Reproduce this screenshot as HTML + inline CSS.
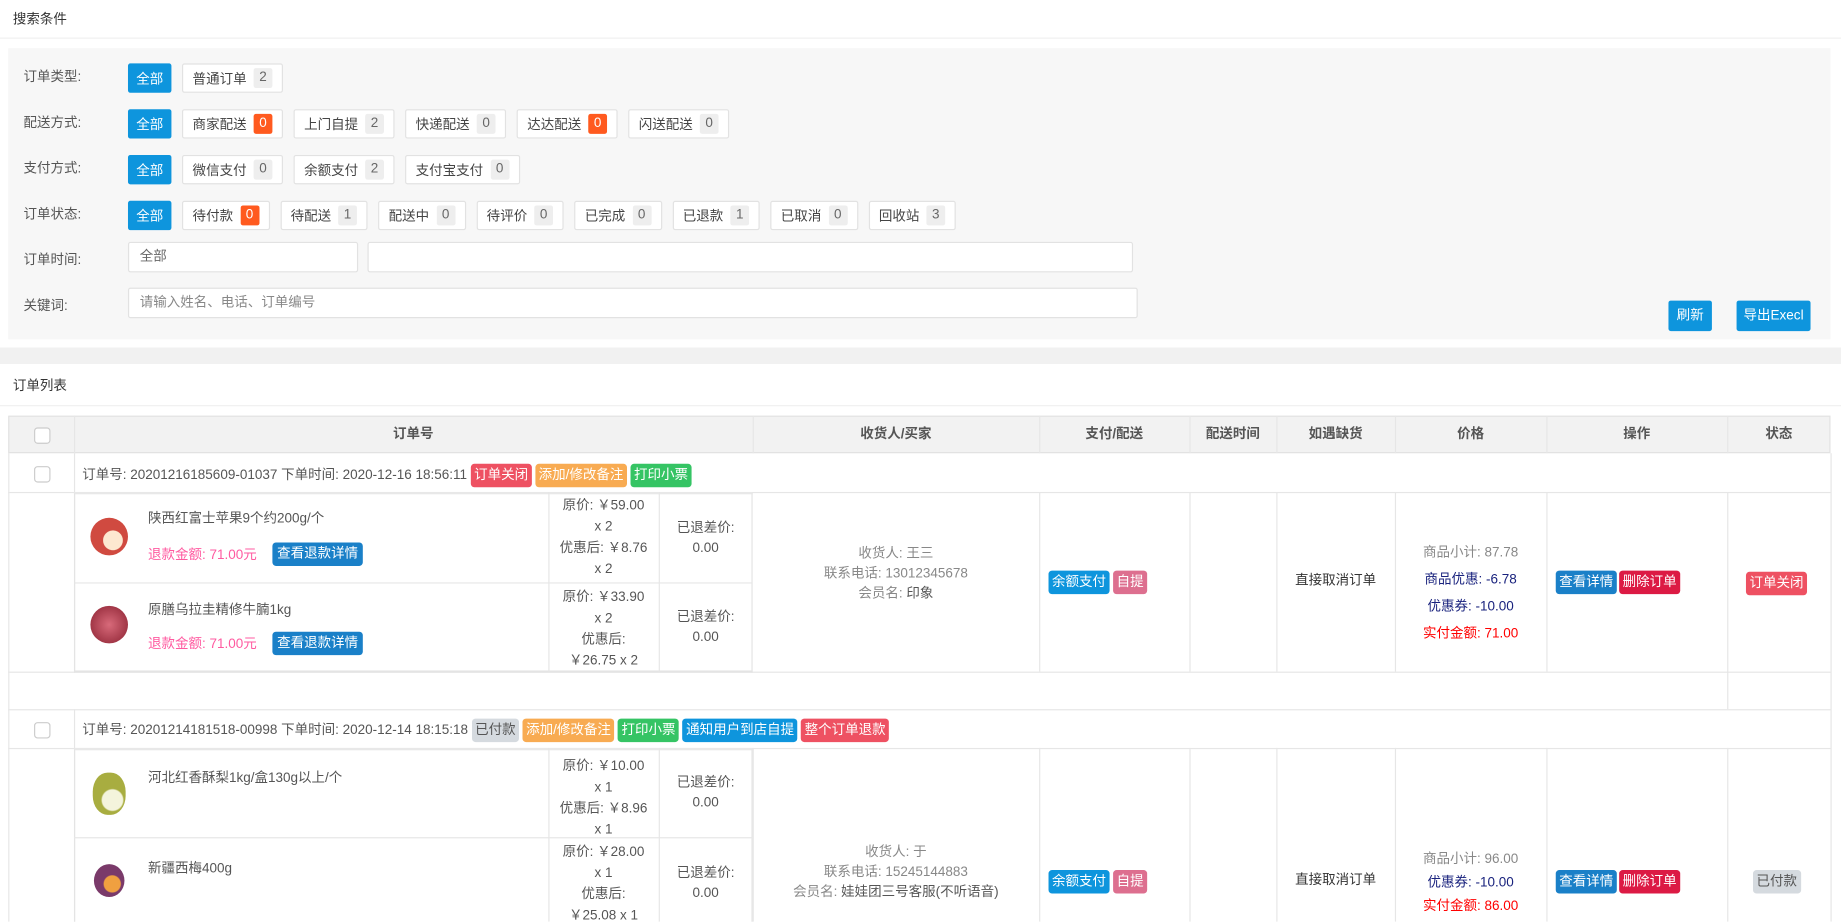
<!DOCTYPE html>
<html><head><meta charset="utf-8"><style>
*{margin:0;padding:0;box-sizing:border-box}
body{width:1841px;height:921px;overflow:hidden;background:#fff;font-family:"Liberation Sans","Noto Sans CJK SC",sans-serif;font-size:11.5px;color:#555;position:relative}
#w{position:absolute;left:0;top:0;width:1568px;height:785px;transform:scale(1.17415);transform-origin:0 0;overflow:hidden}
.a{position:absolute}
.lbl{position:absolute;left:20px;color:#555;line-height:14px}
.row{position:absolute;left:109px;display:flex;gap:9px;height:25px}
.b{height:25px;border:1px solid #e2e2e2;background:#fff;border-radius:2px;display:flex;align-items:center;padding:0 8px;color:#444;white-space:nowrap}
.b.on{background:#0e95dd;border-color:#0e95dd;color:#fff;padding:0 6px}
.n{display:inline-block;min-width:16px;height:17px;line-height:17px;text-align:center;background:#eee;color:#666;border-radius:2px;margin-left:6px;padding:0 4px}
.n.r{background:#ff5a1f;color:#fff}
.inp{position:absolute;height:26px;border:1px solid #e2e2e2;background:#fff;border-radius:2px;padding:0 9px;line-height:24px;color:#666}
.vl{position:absolute;width:1px;background:#e6e6e6}
.hl{position:absolute;height:1px;background:#e6e6e6}
.th{position:absolute;top:354px;height:32px;line-height:32px;text-align:center;font-weight:bold;color:#555}
.cb{position:absolute;width:14px;height:14px;border:1px solid #ccc;border-radius:3px;background:#fff}
.tag{display:inline-block;height:20px;line-height:20px;padding:0 3px;color:#fff;border-radius:3px;font-size:11.5px;margin-left:3px}
.c{position:absolute;text-align:center;line-height:17px}
</style></head><body><div id="w">
<div class="a" style="left:11px;top:8px;color:#333">搜索条件</div>
<div class="hl" style="left:0;top:32px;width:1568px;background:#f0f0f0"></div>
<div class="a" style="left:7px;top:41px;width:1552px;height:248px;background:#f7f7f7"></div>

<div class="lbl" style="top:59px">订单类型:</div>
<div class="row" style="top:54px"><div class="b on">全部</div><div class="b">普通订单<span class="n">2</span></div></div>
<div class="lbl" style="top:98px">配送方式:</div>
<div class="row" style="top:93px"><div class="b on">全部</div><div class="b">商家配送<span class="n r">0</span></div><div class="b">上门自提<span class="n">2</span></div><div class="b">快递配送<span class="n">0</span></div><div class="b">达达配送<span class="n r">0</span></div><div class="b">闪送配送<span class="n">0</span></div></div>
<div class="lbl" style="top:137px">支付方式:</div>
<div class="row" style="top:132px"><div class="b on">全部</div><div class="b">微信支付<span class="n">0</span></div><div class="b">余额支付<span class="n">2</span></div><div class="b">支付宝支付<span class="n">0</span></div></div>
<div class="lbl" style="top:176px">订单状态:</div>
<div class="row" style="top:171px"><div class="b on">全部</div><div class="b">待付款<span class="n r">0</span></div><div class="b">待配送<span class="n">1</span></div><div class="b">配送中<span class="n">0</span></div><div class="b">待评价<span class="n">0</span></div><div class="b">已完成<span class="n">0</span></div><div class="b">已退款<span class="n">1</span></div><div class="b">已取消<span class="n">0</span></div><div class="b">回收站<span class="n">3</span></div></div>
<div class="lbl" style="top:215px">订单时间:</div>
<div class="inp" style="left:109px;top:206px;width:196px">全部</div>
<div class="inp" style="left:313px;top:206px;width:652px"></div>
<div class="lbl" style="top:254px">关键词:</div>
<div class="inp" style="left:109px;top:245px;width:860px;color:#888">请输入姓名、电话、订单编号</div>
<div class="a" style="left:1421px;top:256px;width:37px;height:26px;background:#0e95dd;color:#fff;border-radius:2px;text-align:center;line-height:26px">刷新</div>
<div class="a" style="left:1479px;top:256px;width:63px;height:26px;background:#0e95dd;color:#fff;border-radius:2px;text-align:center;line-height:26px">导出Execl</div>

<div class="a" style="left:0;top:296px;width:1568px;height:14px;background:#f1f1f1"></div>
<div class="a" style="left:11px;top:320px;color:#333">订单列表</div>
<div class="hl" style="left:0;top:345px;width:1568px;background:#f0f0f0"></div>

<div class="a" style="left:7px;top:354px;width:1552px;height:32px;background:#f2f2f2;border:1px solid #e2e2e2"></div>
<div class="cb" style="left:29px;top:364px"></div>
<div class="th" style="left:63px;width:578px">订单号</div>
<div class="th" style="left:641px;width:244px">收货人/买家</div>
<div class="th" style="left:885px;width:128px">支付/配送</div>
<div class="th" style="left:1013px;width:74px">配送时间</div>
<div class="th" style="left:1087px;width:101px">如遇缺货</div>
<div class="th" style="left:1188px;width:129px">价格</div>
<div class="th" style="left:1317px;width:154px">操作</div>
<div class="th" style="left:1471px;width:88px">状态</div>
<div class="vl" style="left:63px;top:354px;height:32px"></div><div class="vl" style="left:641px;top:354px;height:32px"></div><div class="vl" style="left:885px;top:354px;height:32px"></div><div class="vl" style="left:1013px;top:354px;height:32px"></div><div class="vl" style="left:1087px;top:354px;height:32px"></div><div class="vl" style="left:1188px;top:354px;height:32px"></div><div class="vl" style="left:1317px;top:354px;height:32px"></div><div class="vl" style="left:1471px;top:354px;height:32px"></div>

<div class="vl" style="left:7px;top:386px;height:399px"></div>
<div class="vl" style="left:1559px;top:386px;height:399px"></div>
<div class="vl" style="left:63px;top:386px;height:186px"></div>
<div class="vl" style="left:63px;top:604px;height:181px"></div>

<div class="hl" style="left:7px;top:419px;width:1552px"></div>
<div class="cb" style="left:29px;top:397px"></div>
<div class="a" style="left:70px;top:395px;color:#555;white-space:nowrap">订单号: 20201216185609-01037 下单时间: 2020-12-16 18:56:11<span class="tag" style="background:#ee5162">订单关闭</span><span class="tag" style="background:#f8ab52">添加/修改备注</span><span class="tag" style="background:#35c464">打印小票</span></div>
<div class="a" style="left:63px;top:419px;width:578px;height:154px;border:1px solid #e4e4e4;border-top:2px solid #e8e8e8;border-bottom:2px solid #e4e4e4"></div>
<div class="hl" style="left:63px;top:496px;width:578px"></div>
<div class="vl" style="left:467px;top:419px;height:153px"></div><div class="vl" style="left:561px;top:419px;height:153px"></div>
<div class="a" style="left:77px;top:441px;width:32px;height:32px;border-radius:50%;background:radial-gradient(circle at 60% 60%,#fde8d0 30%,#d04a40 32%)"></div>
<div class="a" style="left:126px;top:433px;color:#555">陕西红富士苹果9个约200g/个</div>
<div class="a" style="left:126px;top:464px;color:#ff5aa0">退款金额: 71.00元</div>
<div class="a" style="left:232px;top:462px;height:20px;line-height:20px;padding:0 4px;background:#1a80c8;color:#fff;border-radius:3px">查看退款详情</div>
<div class="c" style="left:467px;top:422px;width:94px;line-height:18px">原价: ￥59.00<br>x 2<br>优惠后: ￥8.76<br>x 2</div>
<div class="c" style="left:561px;top:442px;width:80px">已退差价:<br>0.00</div>
<div class="a" style="left:77px;top:516px;width:32px;height:32px;border-radius:50%;background:radial-gradient(circle,#d86a7a,#8a2030)"></div>
<div class="a" style="left:126px;top:511px;color:#555">原膳乌拉圭精修牛腩1kg</div>
<div class="a" style="left:126px;top:540px;color:#ff5aa0">退款金额: 71.00元</div>
<div class="a" style="left:232px;top:538px;height:20px;line-height:20px;padding:0 4px;background:#1a80c8;color:#fff;border-radius:3px">查看退款详情</div>
<div class="c" style="left:467px;top:500px;width:94px;line-height:18px">原价: ￥33.90<br>x 2<br>优惠后:<br>￥26.75 x 2</div>
<div class="c" style="left:561px;top:518px;width:80px">已退差价:<br>0.00</div>
<div class="vl" style="left:885px;top:419px;height:153px"></div><div class="vl" style="left:1013px;top:419px;height:153px"></div><div class="vl" style="left:1087px;top:419px;height:153px"></div><div class="vl" style="left:1188px;top:419px;height:153px"></div><div class="vl" style="left:1317px;top:419px;height:153px"></div><div class="vl" style="left:1471px;top:419px;height:185px"></div>
<div class="c" style="left:641px;top:464px;width:244px;color:#888">收货人: 王三<br>联系电话: 13012345678<br>会员名: <span style="color:#555">印象</span></div>
<div class="a" style="left:893px;top:486px"><span class="tag" style="background:#0e95dd;margin:0">余额支付</span><span class="tag" style="background:#dd6f8f">自提</span></div>
<div class="c" style="left:1087px;top:487px;width:101px;color:#333">直接取消订单</div>
<div class="c" style="left:1188px;top:460px;width:129px;line-height:23px;color:#888">商品小计: 87.78<br><span style="color:#1a237e">商品优惠: -6.78</span><br><span style="color:#1a237e">优惠券: -10.00</span><br><span style="color:#f00">实付金额: 71.00</span></div>
<div class="a" style="left:1325px;top:486px"><span class="tag" style="background:#1a80c8;margin:0">查看详情</span><span class="tag" style="background:#dc1a44;margin-left:2px">删除订单</span></div>
<div class="a" style="left:1487px;top:487px"><span class="tag" style="background:#ee5162;margin:0">订单关闭</span></div>
<div class="hl" style="left:7px;top:572px;width:1552px"></div>

<div class="hl" style="left:7px;top:604px;width:1552px"></div>
<div class="hl" style="left:7px;top:637px;width:1552px"></div>
<div class="cb" style="left:29px;top:615px"></div>
<div class="a" style="left:70px;top:612px;color:#555;white-space:nowrap">订单号: 20201214181518-00998 下单时间: 2020-12-14 18:15:18<span class="tag" style="background:#d5dadf;color:#555">已付款</span><span class="tag" style="background:#f8ab52">添加/修改备注</span><span class="tag" style="background:#35c464">打印小票</span><span class="tag" style="background:#0e95dd">通知用户到店自提</span><span class="tag" style="background:#ee5162">整个订单退款</span></div>
<div class="a" style="left:63px;top:637px;width:578px;height:160px;border:1px solid #e4e4e4;border-top:2px solid #e8e8e8"></div>
<div class="hl" style="left:63px;top:713px;width:578px"></div>
<div class="vl" style="left:467px;top:637px;height:148px"></div><div class="vl" style="left:561px;top:637px;height:148px"></div>
<div class="a" style="left:79px;top:658px;width:28px;height:36px;border-radius:45%;background:radial-gradient(circle at 60% 65%,#f4f4dc 30%,#a8ad40 34%)"></div>
<div class="a" style="left:126px;top:654px;color:#555">河北红香酥梨1kg/盒130g以上/个</div>
<div class="c" style="left:467px;top:644px;width:94px;line-height:18px">原价: ￥10.00<br>x 1<br>优惠后: ￥8.96<br>x 1</div>
<div class="c" style="left:561px;top:659px;width:80px">已退差价:<br>0.00</div>
<div class="a" style="left:80px;top:736px;width:26px;height:28px;border-radius:50%;background:radial-gradient(circle at 60% 60%,#f0a040 30%,#7a3a6a 34%)"></div>
<div class="a" style="left:126px;top:731px;color:#555">新疆西梅400g</div>
<div class="c" style="left:467px;top:717px;width:94px;line-height:18px">原价: ￥28.00<br>x 1<br>优惠后:<br>￥25.08 x 1</div>
<div class="c" style="left:561px;top:736px;width:80px">已退差价:<br>0.00</div>
<div class="vl" style="left:641px;top:637px;height:148px"></div><div class="vl" style="left:885px;top:637px;height:148px"></div><div class="vl" style="left:1013px;top:637px;height:148px"></div><div class="vl" style="left:1087px;top:637px;height:148px"></div><div class="vl" style="left:1188px;top:637px;height:148px"></div><div class="vl" style="left:1317px;top:637px;height:148px"></div><div class="vl" style="left:1471px;top:637px;height:148px"></div>
<div class="c" style="left:641px;top:718px;width:244px;color:#888">收货人: 于<br>联系电话: 15245144883<br>会员名: <span style="color:#555">娃娃团三号客服(不听语音)</span></div>
<div class="a" style="left:893px;top:741px"><span class="tag" style="background:#0e95dd;margin:0">余额支付</span><span class="tag" style="background:#dd6f8f">自提</span></div>
<div class="c" style="left:1087px;top:742px;width:101px;color:#333">直接取消订单</div>
<div class="c" style="left:1188px;top:722px;width:129px;line-height:20px;color:#888">商品小计: 96.00<br><span style="color:#1a237e">优惠券: -10.00</span><br><span style="color:#f00">实付金额: 86.00</span></div>
<div class="a" style="left:1325px;top:741px"><span class="tag" style="background:#1a80c8;margin:0">查看详情</span><span class="tag" style="background:#dc1a44;margin-left:2px">删除订单</span></div>
<div class="a" style="left:1493px;top:741px"><span class="tag" style="background:#d5dadf;color:#555;margin:0">已付款</span></div>
</div></body></html>
